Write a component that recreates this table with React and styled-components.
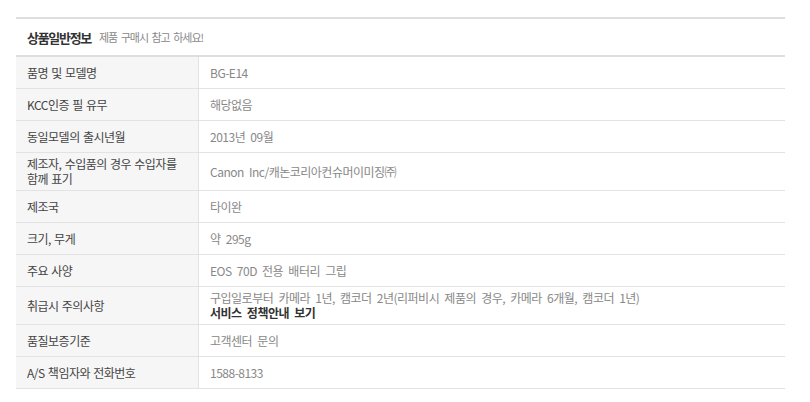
import styled, { createGlobalStyle } from "styled-components";

const GlobalStyle = createGlobalStyle`
    body {
        margin: 0;
        background: #fff;
        font-family: 'Malgun Gothic', 'Noto Sans CJK KR', sans-serif;
    }
`;

const Section = styled.div`
    width: 769px;
    margin: 17px 0 0 16px;
    border-top: 2px solid #dedede;
`;

const Header = styled.div`
    height: 36px;
    padding: 0 11px;
    display: flex;
    align-items: center;
    gap: 8px;
    border-bottom: 2px solid #dedede;
`;

const Title = styled.h3`
    margin: 0;
    font-size: 13px;
    font-weight: 700;
    letter-spacing: -1.3px;
    color: #333;
`;

const Sub = styled.span`
    font-size: 11px;
    letter-spacing: -1px;
    word-spacing: 2px;
    color: #888;
`;

const Row = styled.div`
    display: grid;
    grid-template-columns: 183px 1fr;
    border-bottom: 1px solid #e3e3e3;
    font-size: 12px;
    letter-spacing: -0.5px;
    line-height: 15px;
`;

const Cell = styled.div`
    min-height: 31px;
    box-sizing: border-box;
    padding: 3px 11px 4px;
    display: flex;
    flex-direction: column;
    justify-content: center;
`;

const Label = styled(Cell)`
    background: #f6f6f6;
    border-right: 1px solid #e3e3e3;
    color: #444;
    word-spacing: 1px;
`;

const Value = styled(Cell)`
    color: #888;
    word-spacing: 3px;
`;

const LinkText = styled.a`
    color: #333;
    font-weight: 700;
    text-decoration: none;
`;

const rows = [
    ["품명 및 모델명", "BG-E14"],
    ["KCC인증 필 유무", "해당없음"],
    ["동일모델의 출시년월", "2013년 09월"],
    [<>제조자, 수입품의 경우 수입자를<br />함께 표기</>, "Canon Inc/캐논코리아컨슈머이미징㈜"],
    ["제조국", "타이완"],
    ["크기, 무게", "약 295g"],
    ["주요 사양", "EOS 70D 전용 배터리 그립"],
    ["취급시 주의사항", <>
        <span>구입일로부터 카메라 1년, 캠코더 2년(리퍼비시 제품의 경우, 카메라 6개월, 캠코더 1년)</span>
        <LinkText href="#">서비스 정책안내 보기</LinkText>
    </>],
    ["품질보증기준", "고객센터 문의"],
    ["A/S 책임자와 전화번호", "1588-8133"],
];

const App = () => {
    return (
        <>
            <GlobalStyle />
            <Section>
                <Header>
                    <Title>상품일반정보</Title>
                    <Sub>제품 구매시 참고 하세요!</Sub>
                </Header>
                {rows.map(([label, value], i) => (
                    <Row key={i}>
                        <Label>{label}</Label>
                        <Value>{value}</Value>
                    </Row>
                ))}
            </Section>
        </>
    )
}

export default App;
